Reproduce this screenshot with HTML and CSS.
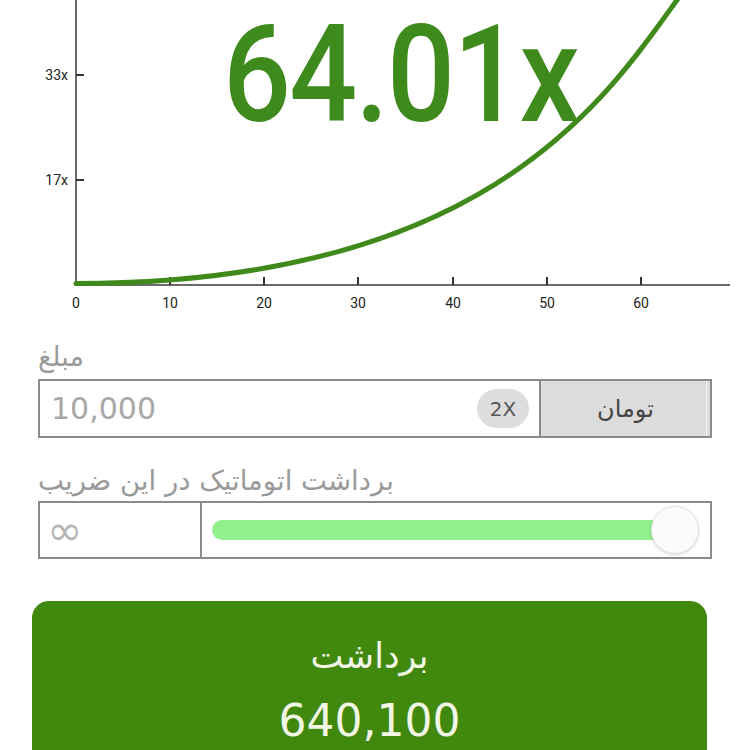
FILE: index.html
```html
<!DOCTYPE html>
<html lang="fa">
<head>
<meta charset="utf-8">
<title>Crash</title>
<link rel="stylesheet" href="styles.css">
</head>
<body>
<div class="chart">
  <svg class="chart-svg" width="750" height="335" viewBox="0 0 750 335">
    <line x1="76" y1="0" x2="76" y2="286" class="axis"/>
    <line x1="75" y1="285" x2="730" y2="285" class="axis"/>
    <line x1="76" y1="75" x2="84" y2="75" class="tick"/>
    <line x1="76" y1="180" x2="84" y2="180" class="tick"/>
    <line x1="170" y1="277" x2="170" y2="285" class="tick"/>
    <line x1="264" y1="277" x2="264" y2="285" class="tick"/>
    <line x1="358" y1="277" x2="358" y2="285" class="tick"/>
    <line x1="453" y1="277" x2="453" y2="285" class="tick"/>
    <line x1="547" y1="277" x2="547" y2="285" class="tick"/>
    <line x1="641" y1="277" x2="641" y2="285" class="tick"/>
    <text x="68" y="80" class="ylabel">33x</text>
    <text x="68" y="185" class="ylabel">17x</text>
    <text x="76" y="308" class="xlabel">0</text>
    <text x="170" y="308" class="xlabel">10</text>
    <text x="264" y="308" class="xlabel">20</text>
    <text x="358" y="308" class="xlabel">30</text>
    <text x="453" y="308" class="xlabel">40</text>
    <text x="547" y="308" class="xlabel">50</text>
    <text x="641" y="308" class="xlabel">60</text>
    <path class="curve" d="M76,283.5 C485,283.5 605,100 677,0 L686,-12"/>
  </svg>
  <div class="multiplier">64.01x</div>
</div>

<div class="form">
  <div class="label" dir="rtl">مبلغ</div>
  <div class="amount-row">
    <div class="amount-field">
      <span class="amount-value">10,000</span>
      <span class="double-pill">2X</span>
    </div>
    <div class="currency" dir="rtl">تومان</div>
  </div>

  <div class="label label-auto" dir="rtl">برداشت اتوماتیک در این ضریب</div>
  <div class="auto-row">
    <div class="auto-value">∞</div>
    <div class="slider">
      <div class="slider-track"></div>
      <div class="slider-thumb"></div>
    </div>
  </div>
</div>

<div class="cashout">
  <div class="cashout-title" dir="rtl">برداشت</div>
  <div class="cashout-amount">640,100</div>
</div>
</body>
</html>
```

FILE: styles.css
```css
html, body {
  margin: 0;
  padding: 0;
  background: #ffffff;
}

body {
  width: 750px;
  height: 750px;
  overflow: hidden;
  font-family: "DejaVu Sans", "Noto Sans", sans-serif;
}

.chart {
  position: relative;
  height: 335px;
}

.chart-svg {
  display: block;
}

.axis {
  stroke: #6a6a6a;
  stroke-width: 2;
}

.tick {
  stroke: #333333;
  stroke-width: 2;
}

.ylabel {
  font-family: Roboto, "DejaVu Sans", sans-serif;
  font-size: 14px;
  fill: #222222;
  text-anchor: end;
}

.xlabel {
  font-family: Roboto, "DejaVu Sans", sans-serif;
  font-size: 14px;
  fill: #222222;
  text-anchor: middle;
}

.curve {
  fill: none;
  stroke: #3f8a1a;
  stroke-width: 5;
  stroke-linecap: round;
  stroke-linejoin: round;
}

.multiplier {
  position: absolute;
  top: 7px;
  left: 223px;
  font-family: Roboto, "DejaVu Sans", sans-serif;
  font-weight: 500;
  font-size: 136px;
  line-height: 1;
  letter-spacing: -2px;
  color: #3f8a1c;
  white-space: nowrap;
  transform: scaleX(0.88);
  transform-origin: left top;
}

.form {
  width: 674px;
  margin-left: 38px;
}

.label {
  text-align: left;
  font-size: 27px;
  line-height: 44px;
  height: 44px;
  color: #9a9a9a;
}

.label-auto {
  margin-top: 21px;
  height: 42px;
  line-height: 42px;
  font-size: 27.5px;
}

.amount-row {
  display: flex;
  height: 59px;
  box-sizing: border-box;
  border: 2px solid #8a8a8a;
}

.amount-field {
  flex: 1;
  display: flex;
  align-items: center;
  justify-content: space-between;
  padding: 0 10px 0 11px;
  background: #ffffff;
}

.amount-value {
  font-size: 30px;
  color: #a8a8a8;
}

.double-pill {
  width: 52px;
  height: 39px;
  border-radius: 20px;
  background: #dddddd;
  color: #555555;
  font-size: 20px;
  display: flex;
  align-items: center;
  justify-content: center;
}

.currency {
  width: 169px;
  border-left: 2px solid #8a8a8a;
  background: #dcdcdc;
  box-shadow: inset -3px 0 0 #dcdcdc, inset -4px 0 0 #f2f2f2;
  display: flex;
  align-items: center;
  justify-content: center;
  font-size: 24px;
  color: #444444;
}

.auto-row {
  display: flex;
  height: 58px;
  box-sizing: border-box;
  border: 2px solid #8a8a8a;
}

.auto-value {
  width: 162px;
  border-right: 2px solid #8a8a8a;
  display: flex;
  align-items: center;
  padding-left: 7px;
  box-sizing: border-box;
  font-size: 42px;
  color: #b5b5b5;
}

.slider {
  flex: 1;
  display: flex;
  align-items: center;
  padding: 0 11px 0 10px;
}

.slider-track {
  flex: 1;
  height: 20px;
  border-radius: 10px;
  background: #90f08c;
}

.slider-thumb {
  width: 46px;
  height: 46px;
  margin-left: -30px;
  border-radius: 50%;
  background: #fbfbfb;
  border: 1px solid #e2e2e2;
  box-shadow: 0 1px 3px rgba(0, 0, 0, 0.15);
}

.cashout {
  width: 675px;
  height: 190px;
  margin: 42px 0 0 32px;
  border-radius: 17px;
  background: #41880e;
  color: #f2f6e4;
  display: flex;
  flex-direction: column;
  align-items: center;
  padding-top: 30px;
  box-sizing: border-box;
}

.cashout-title {
  font-size: 35px;
  line-height: 50px;
}

.cashout-amount {
  font-size: 44px;
  line-height: 56px;
  margin-top: 12px;
}
```
